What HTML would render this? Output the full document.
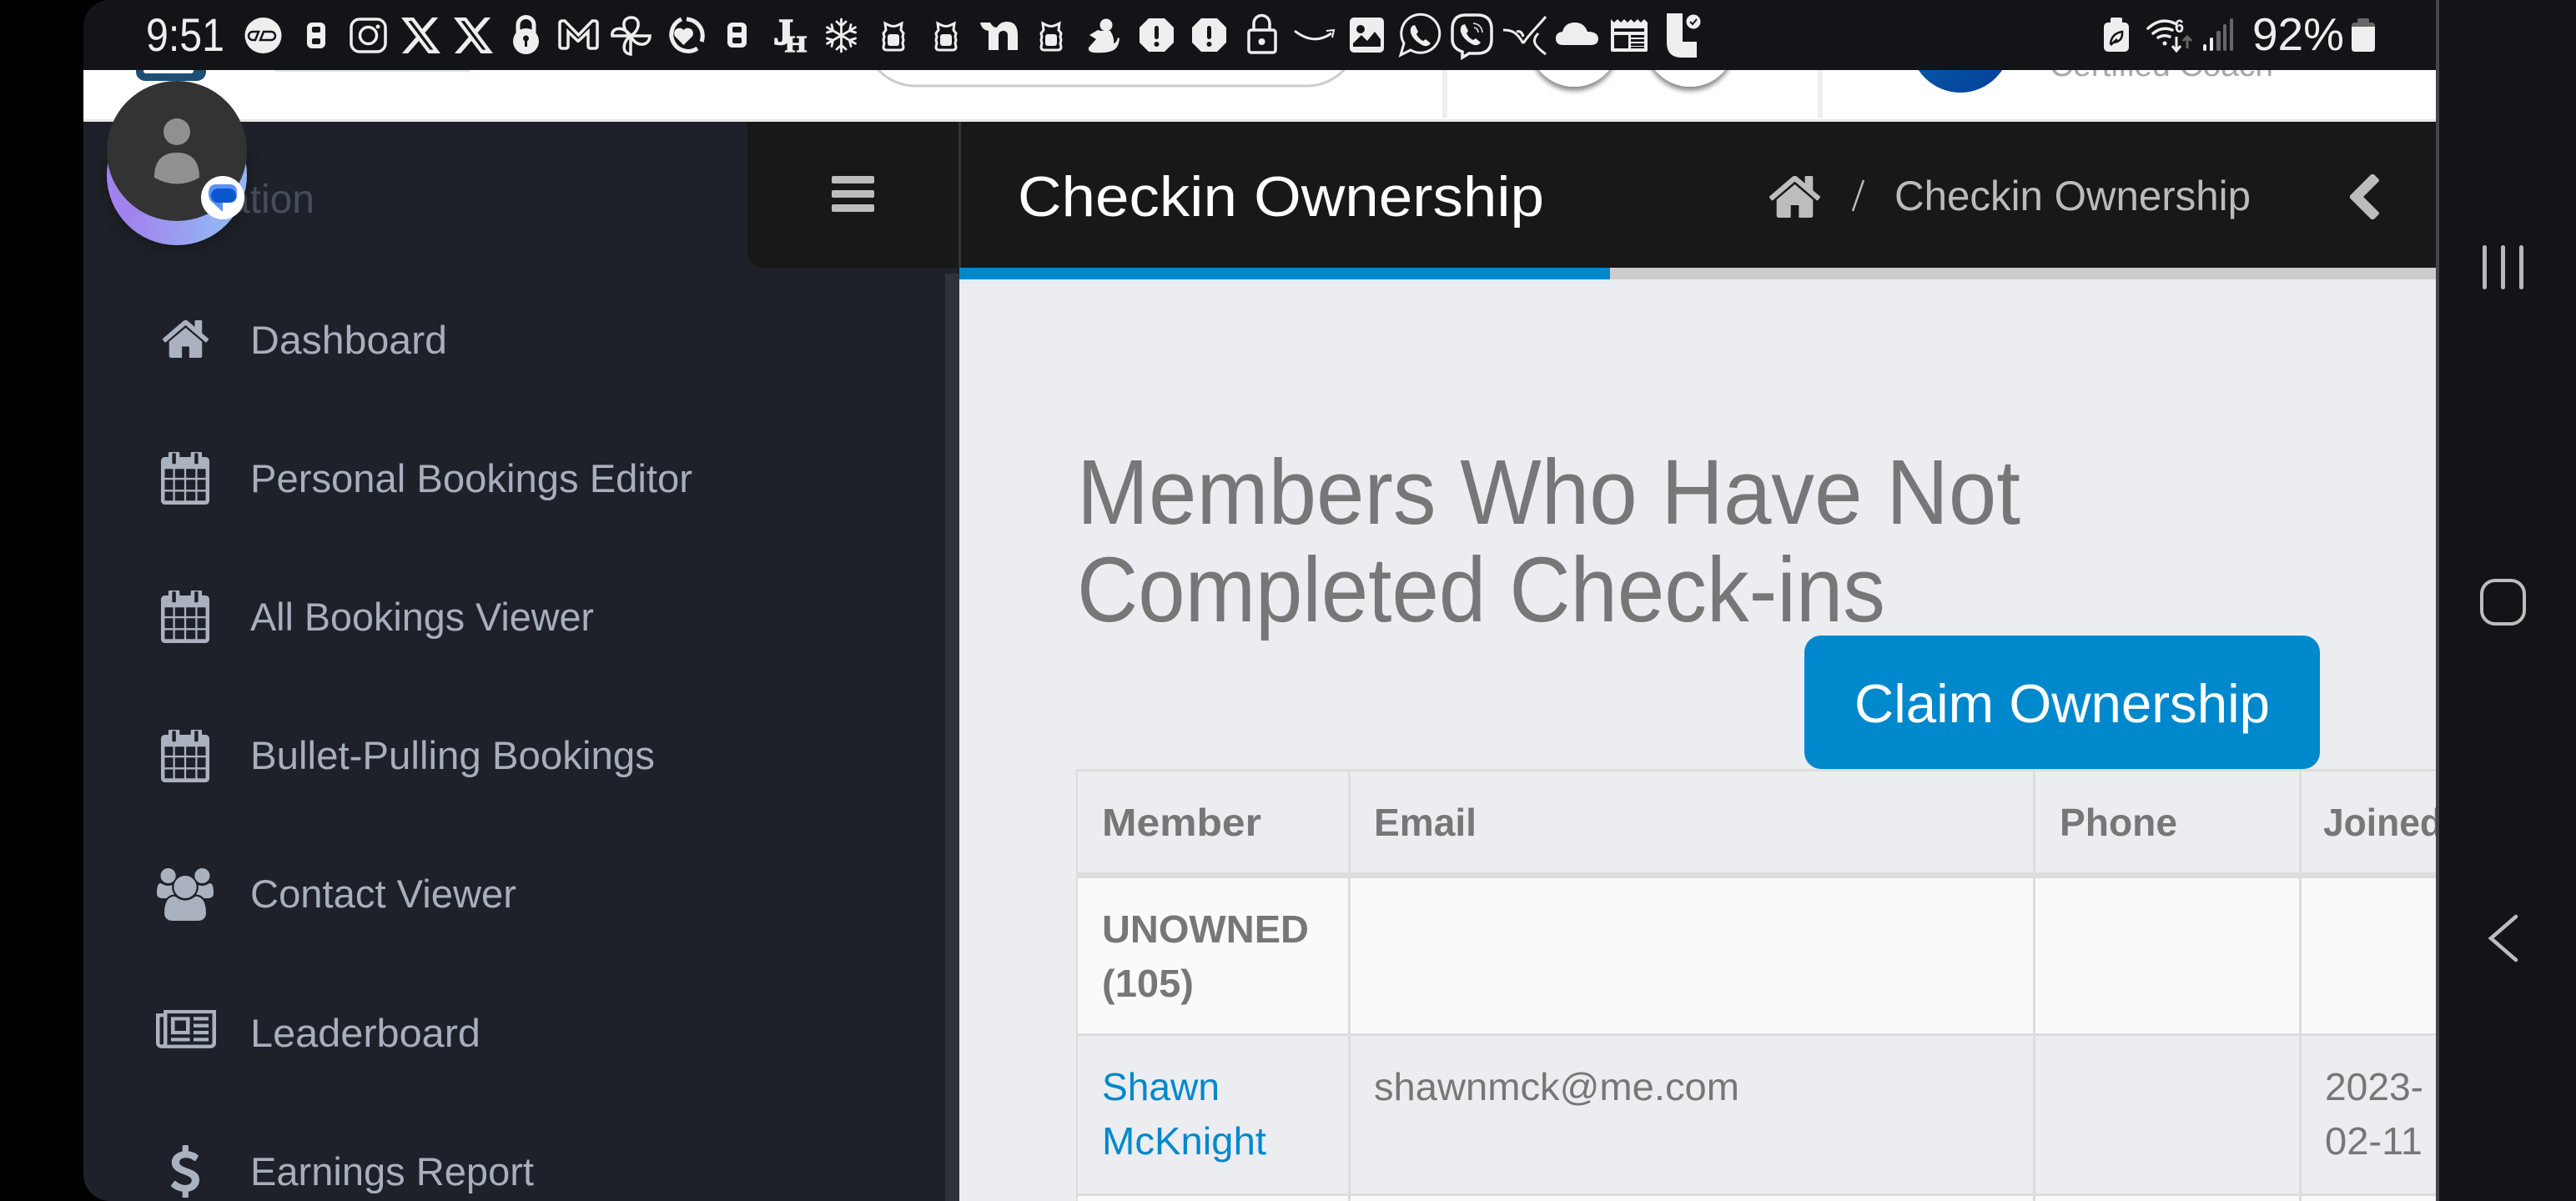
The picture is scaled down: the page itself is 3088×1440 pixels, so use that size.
<!DOCTYPE html>
<html lang="en"><head><meta charset="utf-8"><title>Checkin Ownership</title>
<style>
html,body{margin:0;padding:0;background:#000;width:3088px;height:1440px;overflow:hidden}
svg.root{display:block;font-family:"Liberation Sans",Arial,sans-serif}
</style></head><body>
<svg class="root" width="3088" height="1440" viewBox="0 0 3088 1440" xmlns="http://www.w3.org/2000/svg">
<defs>
<clipPath id="screen"><path d="M132 0H3088V1440H132A32 32 0 0 1 100 1408V32A32 32 0 0 1 132 0Z"/></clipPath>
<clipPath id="below"><rect x="100" y="84" width="2820" height="60"/></clipPath>
<linearGradient id="pur" x1="0" y1="0" x2="1" y2="0.2"><stop offset="0.3" stop-color="#a282ee"/><stop offset="0.95" stop-color="#94b4f3"/></linearGradient>
<linearGradient id="coach" x1="0" y1="0" x2="1" y2="1"><stop offset="0" stop-color="#0a66b8"/><stop offset="1" stop-color="#033f96"/></linearGradient>
<filter id="sh" x="-30%" y="-30%" width="160%" height="160%"><feDropShadow dx="0" dy="4" stdDeviation="10" flood-color="#000" flood-opacity=".35"/></filter>
<filter id="sh2" x="-30%" y="-30%" width="160%" height="160%"><feDropShadow dx="0" dy="5" stdDeviation="3" flood-color="#000" flood-opacity=".45"/></filter>
</defs>
<rect width="3088" height="1440" fill="#000"/>
<g clip-path="url(#screen)">
<!-- sidebar -->
<rect x="100" y="0" width="1050" height="1440" fill="#1e2129"/>
<rect x="1133" y="328" width="17" height="1112" fill="#2f323a"/>
<!-- content -->
<rect x="1150" y="335" width="1770" height="1105" fill="#ebedf1"/>
<rect x="1150" y="335" width="780" height="5" fill="#e3ecf3"/>
<!-- header -->
<rect x="100" y="84" width="2820" height="59" fill="#fff"/>
<rect x="100" y="143" width="2820" height="3" fill="#e9e9e9"/>
<g clip-path="url(#below)">
<rect x="163" y="60" width="84" height="37" rx="11" fill="#1f4e74"/>
<rect x="172" y="60" width="60" height="28" rx="3" fill="#fff"/>
<rect x="330" y="84" width="233" height="2" fill="#d3e8f1"/>
<rect x="1037" y="-17" width="590" height="120" rx="60" fill="#fff" stroke="#cccccc" stroke-width="3"/>
<rect x="1729" y="84" width="6" height="58" fill="#eeeeee"/>
<rect x="2179" y="84" width="6" height="58" fill="#eeeeee"/>
<circle cx="1887" cy="50" r="54" fill="#fff" filter="url(#sh2)"/>
<circle cx="2026" cy="50" r="54" fill="#fff" filter="url(#sh2)"/>
<circle cx="2350" cy="51" r="60" fill="url(#coach)"/>
<text x="2457" y="91" font-size="38" fill="#a8a8a8" textLength="268" lengthAdjust="spacingAndGlyphs">Certified Coach</text>
</g>
<!-- title bar -->
<path d="M896 146H2920V321H916A20 20 0 0 1 896 301Z" fill="#181818"/>
<rect x="1149" y="146" width="3" height="175" fill="#333"/>
<rect x="1150" y="321" width="780" height="14" fill="#0088cc"/>
<rect x="1930" y="321" width="990" height="14" fill="#cccccc"/>
<rect x="997" y="211" width="51" height="9" rx="2" fill="#bdbdbd"/>
<rect x="997" y="228" width="51" height="9" rx="2" fill="#bdbdbd"/>
<rect x="997" y="245" width="51" height="9" rx="2" fill="#bdbdbd"/>
<text x="1220" y="259" font-size="68" fill="#fff" textLength="631" lengthAdjust="spacingAndGlyphs">Checkin Ownership</text>
<svg x="2120" y="211" width="63" height="50" viewBox="64 256 1664 1280" preserveAspectRatio="none"><path fill="#bdbdbd" d="M1472 992v480q0 26-19 45t-45 19h-384v-384h-256v384h-384q-26 0-45-19t-19-45v-480q0-1 .5-3t.5-3l575-474 575 474q1 2 1 6zm223-69l-62 74q-8 9-21 11h-3q-13 0-21-7l-692-577-692 577q-12 8-24 7-13-2-21-11l-62-74q-8-10-7-23.5t11-21.5l719-599q32-26 76-26t76 26l244 204v-195q0-14 9-23t23-9h192q14 0 23 9t9 23v408l219 182q10 8 11 21.5t-7 23.5z"/></svg>
<path d="M2234 216L2221 253" stroke="#bbb" stroke-width="2.5" fill="none"/>
<text x="2271" y="252" font-size="50" fill="#bbbbbb" textLength="427" lengthAdjust="spacingAndGlyphs">Checkin Ownership</text>
<svg x="2817" y="209" width="35" height="54" viewBox="429 45 1017 1574" preserveAspectRatio="none"><path fill="#bdbdbd" d="M1427 301l-531 531 531 531q19 19 19 45t-19 45l-166 166q-19 19-45 19t-45-19l-742-742q-19-19-19-45t19-45l742-742q19-19 45-19t45 19l166 166q19 19 19 45t-19 45z"/></svg>
<!-- sidebar nav -->
<text x="377" y="255" font-size="48" fill="#464d5c" text-anchor="end">Navigation</text>
<g fill="#a9b1be">
<svg x="194" y="384" width="57" height="45" viewBox="64 256 1664 1280" preserveAspectRatio="none"><path fill="#aab2bf" d="M1472 992v480q0 26-19 45t-45 19h-384v-384h-256v384h-384q-26 0-45-19t-19-45v-480q0-1 .5-3t.5-3l575-474 575 474q1 2 1 6zm223-69l-62 74q-8 9-21 11h-3q-13 0-21-7l-692-577-692 577q-12 8-24 7-13-2-21-11l-62-74q-8-10-7-23.5t11-21.5l719-599q32-26 76-26t76 26l244 204v-195q0-14 9-23t23-9h192q14 0 23 9t9 23v408l219 182q10 8 11 21.5t-7 23.5z"/></svg>
<svg x="193" y="542" width="58" height="63" viewBox="64 96 1664 1696" preserveAspectRatio="none"><path fill="#aab2bf" d="M192 1664h288v-288h-288v288zm352 0h320v-288h-320v288zm-352-352h288v-320h-288v320zm352 0h320v-320h-320v320zm-352-384h288v-288h-288v288zm736 736h320v-288h-320v288zm-384-736h320v-288h-320v288zm768 736h288v-288h-288v288zm-384-352h320v-320h-320v320zm-352-864v-288q0-13-9.500-22.500t-22.500-9.500h-64q-13 0-22.500 9.500t-9.500 22.500v288q0 13 9.500 22.500t22.500 9.500h64q13 0 22.500-9.500t9.500-22.500zm736 864h288v-320h-288v320zm-384-384h320v-288h-320v288zm384 0h288v-288h-288v288zm32-480v-288q0-13-9.500-22.500t-22.500-9.500h-64q-13 0-22.500 9.500t-9.500 22.500v288q0 13 9.500 22.500t22.500 9.500h64q13 0 22.500-9.500t9.500-22.500zm384-64v1280q0 52-38 90t-90 38h-1408q-52 0-90-38t-38-90v-1280q0-52 38-90t90-38h128v-96q0-66 47-113t113-47h64q66 0 113 47t47 113v96h384v-96q0-66 47-113t113-47h64q66 0 113 47t47 113v96h128q52 0 90 38t38 90z"/></svg>
<svg x="193" y="708" width="58" height="63" viewBox="64 96 1664 1696" preserveAspectRatio="none"><path fill="#aab2bf" d="M192 1664h288v-288h-288v288zm352 0h320v-288h-320v288zm-352-352h288v-320h-288v320zm352 0h320v-320h-320v320zm-352-384h288v-288h-288v288zm736 736h320v-288h-320v288zm-384-736h320v-288h-320v288zm768 736h288v-288h-288v288zm-384-352h320v-320h-320v320zm-352-864v-288q0-13-9.500-22.500t-22.500-9.500h-64q-13 0-22.500 9.500t-9.500 22.500v288q0 13 9.500 22.500t22.500 9.500h64q13 0 22.500-9.500t9.500-22.500zm736 864h288v-320h-288v320zm-384-384h320v-288h-320v288zm384 0h288v-288h-288v288zm32-480v-288q0-13-9.500-22.500t-22.500-9.500h-64q-13 0-22.500 9.500t-9.500 22.500v288q0 13 9.500 22.500t22.500 9.500h64q13 0 22.500-9.500t9.500-22.500zm384-64v1280q0 52-38 90t-90 38h-1408q-52 0-90-38t-38-90v-1280q0-52 38-90t90-38h128v-96q0-66 47-113t113-47h64q66 0 113 47t47 113v96h384v-96q0-66 47-113t113-47h64q66 0 113 47t47 113v96h128q52 0 90 38t38 90z"/></svg>
<svg x="193" y="875" width="58" height="63" viewBox="64 96 1664 1696" preserveAspectRatio="none"><path fill="#aab2bf" d="M192 1664h288v-288h-288v288zm352 0h320v-288h-320v288zm-352-352h288v-320h-288v320zm352 0h320v-320h-320v320zm-352-384h288v-288h-288v288zm736 736h320v-288h-320v288zm-384-736h320v-288h-320v288zm768 736h288v-288h-288v288zm-384-352h320v-320h-320v320zm-352-864v-288q0-13-9.500-22.500t-22.500-9.500h-64q-13 0-22.500 9.500t-9.500 22.500v288q0 13 9.500 22.500t22.500 9.500h64q13 0 22.500-9.500t9.500-22.500zm736 864h288v-320h-288v320zm-384-384h320v-288h-320v288zm384 0h288v-288h-288v288zm32-480v-288q0-13-9.500-22.500t-22.500-9.500h-64q-13 0-22.500 9.500t-9.500 22.500v288q0 13 9.500 22.500t22.500 9.500h64q13 0 22.500-9.500t9.500-22.500zm384-64v1280q0 52-38 90t-90 38h-1408q-52 0-90-38t-38-90v-1280q0-52 38-90t90-38h128v-96q0-66 47-113t113-47h64q66 0 113 47t47 113v96h384v-96q0-66 47-113t113-47h64q66 0 113 47t47 113v96h128q52 0 90 38t38 90z"/></svg>
<svg x="188" y="1041" width="68" height="63" viewBox="64 0 1920 1792" preserveAspectRatio="none"><path fill="#aab2bf" d="M657 896q-162 5-265 128h-134q-82 0-138-40.500t-56-118.500q0-353 124-353 6 0 43.500 21t97.500 42.500 119 21.500q67 0 133-23-5 37-5 66 0 139 81 256zm1071 637q0 120-73 189.500t-194 69.500h-874q-121 0-194-69.500t-73-189.500q0-53 3.500-103.500t14-109 26.500-108.500 43-97.500 62-81 85.500-53.500 111.500-20q10 0 43 21.500t73 48 107 48 135 21.500 135-21.500 107-48 73-48 43-21.500q61 0 111.500 20t85.500 53.500 62 81 43 97.500 26.500 108.500 14 109 3.500 103.500zm-1024-1277q0 106-75 181t-181 75-181-75-75-181 75-181 181-75 181 75 75 181zm704 384q0 159-112.500 271.500t-271.500 112.500-271.500-112.500-112.500-271.500 112.500-271.500 271.500-112.500 271.500 112.500 112.500 271.500zm576 225q0 78-56 118.500t-138 40.500h-134q-103-123-265-128 81-117 81-256 0-29-5-66 66 23 133 23 59 0 119-21.500t97.500-42.500 43.500-21q124 0 124 353zm-128-609q0 106-75 181t-181 75-181-75-75-181 75-181 181-75 181 75 75 181z"/></svg>
<svg x="187" y="1211" width="72" height="50" viewBox="0 128 2048 1536" preserveAspectRatio="none"><path fill="#aab2bf" d="M1024 512h-384v384h384v-384zm128 640v128h-640v-128h640zm0-768v640h-640v-640h640zm640 768v128h-512v-128h512zm0-256v128h-512v-128h512zm0-256v128h-512v-128h512zm0-256v128h-512v-128h512zm-1536 960v-960h-128v960q0 26 19 45t45 19 45-19 19-45zm1664 0v-1088h-1536v1088q0 33-11 64h1483q26 0 45-19t19-45zm128-1216v1216q0 80-56 136t-136 56h-1664q-80 0-136-56t-56-136v-1088h256v-128h1792z"/></svg>
<svg x="205" y="1373" width="34" height="63" viewBox="430 0 932 1792" preserveAspectRatio="none"><path fill="#aab2bf" d="M1362 1185q0 153-99.500 263.500t-258.500 136.500v175q0 14-9 23t-23 9h-135q-13 0-22.500-9.500t-9.500-22.500v-175q-66-9-127.500-31t-101.500-44.500-74-48-46.500-37.500-17.500-18q-17-21-2-41l103-135q7-10 23-12 15-2 24 9l2 2q113 99 243 125 37 8 74 8 81 0 142.500-43t61.500-122q0-28-15-53t-33.500-42-58.500-37.500-66-32-80-32.500q-39-16-61.500-25t-61.500-26.500-62.500-31-56.500-35.500-53.500-42.500-43.500-49-35.500-58-21-66.500-8.500-78q0-138 98-242t255-134v-180q0-13 9.500-22.500t22.500-9.500h135q14 0 23 9t9 23v176q57 6 110.500 23t87 33.500 63.500 37.500 39 29 15 14q17 18 5 38l-81 146q-8 15-23 16-14 3-27-7-3-3-14.500-12t-39-26.500-58.500-32-74.500-26-85.500-11.500q-95 0-155 43t-60 111q0 26 8.500 48t29.500 41.500 39.500 33 56 31 60.500 27 70 27.500q53 20 81 31.500t76 35 75.500 42.500 62 50 53 63.500 31.500 76.500 13 94z"/></svg>
</g>
<g font-size="47" fill="#a7afbc">
<text x="300" y="424" textLength="236" lengthAdjust="spacingAndGlyphs">Dashboard</text>
<text x="300" y="590" textLength="530" lengthAdjust="spacingAndGlyphs">Personal Bookings Editor</text>
<text x="300" y="756" textLength="412" lengthAdjust="spacingAndGlyphs">All Bookings Viewer</text>
<text x="300" y="922" textLength="485" lengthAdjust="spacingAndGlyphs">Bullet-Pulling Bookings</text>
<text x="300" y="1088" textLength="319" lengthAdjust="spacingAndGlyphs">Contact Viewer</text>
<text x="300" y="1255" textLength="276" lengthAdjust="spacingAndGlyphs">Leaderboard</text>
<text x="300" y="1421" textLength="340" lengthAdjust="spacingAndGlyphs">Earnings Report</text>
</g>
<!-- main -->
<g font-size="110" fill="#777777">
<text x="1291" y="628" textLength="1131" lengthAdjust="spacingAndGlyphs">Members Who Have Not</text>
<text x="1291" y="745" textLength="969" lengthAdjust="spacingAndGlyphs">Completed Check-ins</text>
</g>
<rect x="2163" y="762" width="618" height="160" rx="20" fill="#0088cc"/>
<text x="2223" y="866" font-size="65" fill="#fff" textLength="498" lengthAdjust="spacingAndGlyphs">Claim Ownership</text>
<!-- table -->
<rect x="1290" y="1052" width="1630" height="188" fill="#fafafa"/>
<rect x="1290" y="1434" width="1630" height="6" fill="#fafafa"/>
<g fill="#dddddd">
<rect x="1290" y="922" width="1630" height="3"/>
<rect x="1290" y="1046" width="1630" height="7"/>
<rect x="1290" y="1239" width="1630" height="3"/>
<rect x="1290" y="1431" width="1630" height="3"/>
<rect x="1290" y="922" width="2" height="518"/>
<rect x="1616" y="922" width="3" height="518"/>
<rect x="2437" y="922" width="3" height="518"/>
<rect x="2756" y="922" width="3" height="518"/>
</g>
<g font-size="46" fill="#777777" font-weight="700">
<text x="1321" y="1002" textLength="191" lengthAdjust="spacingAndGlyphs">Member</text>
<text x="1647" y="1002" textLength="123" lengthAdjust="spacingAndGlyphs">Email</text>
<text x="2469" y="1002" textLength="141" lengthAdjust="spacingAndGlyphs">Phone</text>
<text x="2785" y="1002" textLength="143" lengthAdjust="spacingAndGlyphs">Joined</text>
<text x="1321" y="1130" textLength="248" lengthAdjust="spacingAndGlyphs">UNOWNED</text>
<text x="1321" y="1195" textLength="110" lengthAdjust="spacingAndGlyphs">(105)</text>
</g>
<g font-size="46" fill="#0088cc">
<text x="1321" y="1319" textLength="141" lengthAdjust="spacingAndGlyphs">Shawn</text>
<text x="1321" y="1384" textLength="197" lengthAdjust="spacingAndGlyphs">McKnight</text>
</g>
<g font-size="46" fill="#777777">
<text x="1647" y="1319" textLength="438" lengthAdjust="spacingAndGlyphs">shawnmck@me.com</text>
<text x="2787" y="1319" textLength="118" lengthAdjust="spacingAndGlyphs">2023-</text>
<text x="2787" y="1384" textLength="117" lengthAdjust="spacingAndGlyphs">02-11</text>
</g>
<!-- status bar -->
<rect x="100" y="0" width="2988" height="84" fill="#121418"/>
<!-- nav bar -->
<rect x="2920" y="0" width="168" height="1440" fill="#121418"/>
<rect x="2920" y="0" width="4" height="1440" fill="#43454f"/>
</g>
<rect x="2976" y="294" width="5" height="53" rx="2.5" fill="#b8b8b8"/>
<rect x="2998" y="294" width="5" height="53" rx="2.5" fill="#b8b8b8"/>
<rect x="3020" y="294" width="5" height="53" rx="2.5" fill="#b8b8b8"/>
<rect x="2975" y="696" width="51" height="52" rx="16" fill="none" stroke="#bdbdbd" stroke-width="4"/>
<path d="M3016 1099L2986 1125L3016 1151" fill="none" stroke="#bdbdbd" stroke-width="4.5" stroke-linecap="round" stroke-linejoin="miter"/>

<!-- floating avatar -->
<circle cx="212" cy="210" r="84" fill="url(#pur)" filter="url(#sh)"/>
<circle cx="212" cy="181" r="84" fill="#333333"/>
<circle cx="212" cy="158" r="16" fill="#8f918f"/>
<path d="M185 213Q185 183 212 183Q239 183 239 213Q212 228 185 213Z" fill="#8f918f"/>
<circle cx="267" cy="237" r="26" fill="#fff"/>
<path d="M259 221h16q9 0 9 9v4q0 9-9 9h-8v11l-12-11q-5-3-5-11q0-11 9-11z" fill="#5d90f2"/>
<rect x="253" y="226" width="30" height="17" rx="8.500" fill="#0b57d0"/>

<!-- status icons -->
<g fill="#eeeeee">
<text x="175" y="61" font-size="56" textLength="94" lengthAdjust="spacingAndGlyphs" fill="#eeeeee">9:51</text>
<ellipse cx="315.500" cy="42.500" rx="22" ry="21.500"/>
<path d="M303 38h7l-4 10h-3a5 5 0 0 1 0-10zM316 38h9a5 5 0 0 1 0 10h-13z" fill="none" stroke="#121418" stroke-width="2.500"/>
<rect x="368" y="27" width="22" height="31" rx="6"/><rect x="374" y="32" width="10" height="7" rx="2" fill="#121418"/><rect x="374" y="46" width="10" height="7" rx="2" fill="#121418"/>
<rect x="421" y="23" width="41" height="39" rx="10" fill="none" stroke="#eee" stroke-width="3.500"/>
<circle cx="441.500" cy="42.500" r="10" fill="none" stroke="#eee" stroke-width="3.500"/><circle cx="453" cy="32" r="2.500"/>
<svg x="481" y="21" width="47" height="43" viewBox="1.250 2.250 21.600 19.500" preserveAspectRatio="none"><path fill="#eee" d="M18.244 2.250h3.308l-7.227 8.260 8.502 11.240H16.170l-5.214-6.817L4.990 21.750H1.680l7.730-8.835L1.254 2.250H8.080l4.713 6.231zm-1.161 17.520h1.833L7.084 4.126H5.117z"/></svg>
<svg x="544" y="21" width="47" height="43" viewBox="1.250 2.250 21.600 19.500" preserveAspectRatio="none"><path fill="#eee" d="M18.244 2.250h3.308l-7.227 8.260 8.502 11.240H16.170l-5.214-6.817L4.990 21.750H1.680l7.730-8.835L1.254 2.250H8.080l4.713 6.231zm-1.161 17.520h1.833L7.084 4.126H5.117z"/></svg>
<path d="M621 42v-12a9.500 9.500 0 0 1 19 0v12" fill="none" stroke="#eee" stroke-width="5"/>
<circle cx="630.500" cy="49.500" r="15.500"/><circle cx="630.500" cy="46" r="3.500" fill="#121418"/><rect x="629" y="46" width="3" height="10" fill="#121418"/>
<path d="M671 28q0-3 3-3h3l16.500 17 16.500-17h3q3 0 3 3v27q0 3-3 3h-5q-3 0-3-3v-17l-11.500 11q-.5.500-1 0l-11.500-11v17q0 3-3 3h-4q-3 0-3-3z" fill="none" stroke="#eee" stroke-width="3.500"/>
<path d="M756 43C745 35 745 21 757 21C768 21 768 36 756 43ZM756 43H779C779 55 763 58 756 43ZM756 43H734C732 33 748 30 756 43ZM756 43V65C745 64 746 50 756 43Z" fill="none" stroke="#eee" stroke-width="3.500"/>
<path d="M817 23A20 20 0 1 0 836 58" fill="none" stroke="#eee" stroke-width="5"/>
<path d="M823 23A20 20 0 0 1 841 50" fill="none" stroke="#eee" stroke-width="5"/>
<path d="M819.500 54l-10-10a6 6 0 0 1 10-8a6 6 0 0 1 10 8z"/>
<rect x="872" y="27" width="23" height="30" rx="6"/><rect x="878" y="32" width="11" height="7" rx="2" fill="#121418"/><rect x="878" y="45" width="11" height="7" rx="2" fill="#121418"/>
<text x="927" y="53" font-family="Liberation Serif,serif" font-weight="700" font-size="44" stroke="#eee" stroke-width="1.500" textLength="24" lengthAdjust="spacingAndGlyphs">J</text>
<text x="941" y="62" font-family="Liberation Serif,serif" font-weight="700" font-size="27" stroke="#eee" stroke-width="1.200" textLength="26" lengthAdjust="spacingAndGlyphs">H</text>
<g fill="none" stroke="#eee" stroke-width="2.800" stroke-linecap="round">
<path d="M1008.500 23V62M1003 26l5.500 5 5.500-5M1003 59l5.500-5 5.500 5"/>
<path transform="rotate(60 1008.500 42.500)" d="M1008.500 23V62M1003 26l5.500 5 5.500-5M1003 59l5.500-5 5.500 5"/>
<path transform="rotate(120 1008.500 42.500)" d="M1008.500 23V62M1003 26l5.500 5 5.500-5M1003 59l5.500-5 5.500 5"/>
</g>
<g><path d="M1061 28l4 2q6 3 12 0l4-2-1 8 3 4-1 4 1 4-1 4 1 4q0 4-4 4h-16q-4 0-4-4l1-4-1-4 1-4-1-4 3-4z" fill="none" stroke="#eee" stroke-width="3"/><rect x="1064" y="41" width="14" height="14" rx="3"/></g>
<g transform="translate(63 0)"><path d="M1061 28l4 2q6 3 12 0l4-2-1 8 3 4-1 4 1 4-1 4 1 4q0 4-4 4h-16q-4 0-4-4l1-4-1-4 1-4-1-4 3-4z" fill="none" stroke="#eee" stroke-width="3"/><rect x="1064" y="41" width="14" height="14" rx="3"/></g>
<path d="M1175 27h12q3 6 8 6q4-7 12-7q13 0 13 16v18h-12v-17q0-6-5-6q-6 0-6 6v17h-12v-23q-8-1-10-10z"/>
<g transform="translate(189 0)"><path d="M1061 28l4 2q6 3 12 0l4-2-1 8 3 4-1 4 1 4-1 4 1 4q0 4-4 4h-16q-4 0-4-4l1-4-1-4 1-4-1-4 3-4z" fill="none" stroke="#eee" stroke-width="3"/><rect x="1064" y="41" width="14" height="14" rx="3"/></g>
<circle cx="1326" cy="30" r="7.500"/>
<path d="M1320 37h11q5 8 4 15q4-1 5-7l2 1q-1 12-9 15q-8 3-22 2q-7-1-6-6l9-10-8-5 10-6z"/>
<polygon points="1377,22 1396,22 1407,33 1407,51 1396,62 1377,62 1366,51 1366,33"/>
<rect x="1384" y="31" width="5" height="16" rx="2.500" fill="#121418"/><circle cx="1386.500" cy="53" r="3" fill="#121418"/>
<polygon points="1440,22 1459,22 1470,33 1470,51 1459,62 1440,62 1429,51 1429,33"/>
<rect x="1447" y="31" width="5" height="16" rx="2.500" fill="#121418"/><circle cx="1449.500" cy="53" r="3" fill="#121418"/>
<path d="M1503 36v-8a9.500 9.500 0 0 1 19 0v8" fill="none" stroke="#eee" stroke-width="3.500"/>
<rect x="1497" y="36" width="32" height="27" rx="3" fill="none" stroke="#eee" stroke-width="3.500"/><circle cx="1512.500" cy="50" r="4"/>
<path d="M1552 37Q1575 55 1596 40" fill="none" stroke="#eee" stroke-width="3"/>
<path d="M1590 37L1599 36L1597 45" fill="none" stroke="#eee" stroke-width="2"/>
<rect x="1618" y="21" width="41" height="42" rx="5"/>
<circle cx="1631" cy="35" r="5" fill="#121418"/>
<path d="M1622 56v-4l10-10 7 7 9-11 7 9v9z" fill="#121418"/>
<path d="M1679 66l4-14a23 23 0 1 1 8 8z" fill="none" stroke="#eee" stroke-width="3"/>
<path d="M1693 31q-3 3-2 8q3 10 16 16q5 1 8-3l-6-5-3 2q-5-2-8-8l2-3-4-8z"/>
<path d="M1757 18h14q17 0 17 17v12q0 17-17 17h-10l-8 5v-7q-12-4-12-15v-12q0-17 16-17z" fill="none" stroke="#eee" stroke-width="3.500"/>
<path d="M1753 30q-3 3-2 8q3 10 16 16q5 1 8-3l-6-5-3 2q-5-2-8-8l2-3-4-8z"/>
<path d="M1766 28q10 1 11 11M1767 33q5 1 5 6" fill="none" stroke="#eee" stroke-width="1.500"/>
<path d="M1802 36C1812 36 1818 38 1826 52M1818 38q6-2 8 6M1853 20C1843 32 1832 42 1826 52M1844 40C1836 48 1838 54 1853 65" fill="none" stroke="#eee" stroke-width="3"/>
<path d="M1874 54q-9 0-9-8q0-7 8-8q3-11 15-11q11 0 15 11q12 0 13 8q0 8-9 8z"/>
<polygon points="1931,23 1935,27 1939,23 1943,27 1947,23 1951,27 1955,23 1959,27 1963,23 1967,27 1971,23 1975,27 1975,60 1931,60"/>
<rect x="1931" y="28" width="44" height="34" rx="2"/>
<rect x="1935" y="34" width="36" height="4" fill="#121418"/><rect x="1935" y="42" width="17" height="16" fill="#121418"/>
<rect x="1955" y="42" width="16" height="3" fill="#121418"/><rect x="1955" y="47" width="16" height="3" fill="#121418"/><rect x="1955" y="52" width="16" height="3" fill="#121418"/><rect x="1955" y="56" width="16" height="2" fill="#121418"/>
<path d="M1998 16h19v34h17v19h-18q-18 0-18-18z"/>
<circle cx="2030" cy="26" r="8.500"/>
<path d="M2026 26l3 3 5-6" fill="none" stroke="#121418" stroke-width="2"/>
<!-- right -->
<rect x="2522" y="27" width="30" height="35" rx="5"/><rect x="2530" y="21" width="14" height="8" rx="2"/>
<path d="M2530 53q1-13 14-15q1 12-11 13m-3 3l8-7" fill="none" stroke="#121418" stroke-width="2.500"/>
<path d="M2575 34Q2590 20 2607 28M2581 40Q2592 31 2604 36M2587 45Q2594 41 2601 44" fill="none" stroke="#eee" stroke-width="3.500" stroke-linecap="round"/>
<circle cx="2595" cy="52" r="2.500"/>
<text x="2607" y="39" font-size="22" font-weight="700" textLength="11" lengthAdjust="spacingAndGlyphs">6</text>
<path d="M2609 44v17m-5-6l5 6 5-6" fill="none" stroke="#eee" stroke-width="3"/>
<path d="M2622 58v-14m-5 5l5-5 5 5" fill="none" stroke="#666" stroke-width="3"/>
<rect x="2641" y="53" width="4" height="8" rx="2"/><rect x="2649" y="45" width="4" height="16" rx="2"/>
<rect x="2657" y="37" width="5" height="24" rx="2" fill="#666"/><rect x="2665" y="29" width="4" height="32" rx="2" fill="#666"/><rect x="2673" y="22" width="4" height="39" rx="2" fill="#666"/>
<text x="2700" y="60" font-size="55" textLength="110" lengthAdjust="spacingAndGlyphs">92%</text>
<rect x="2826" y="22" width="14" height="8" rx="2" fill="#666"/>
<path d="M2819 31q0-4 4-4h20q4 0 4 4v1h-28z" fill="#666"/>
<path d="M2819 32h28v26q0 4-4 4h-20q-4 0-4-4z"/>
</g>
</svg>
</body></html>
